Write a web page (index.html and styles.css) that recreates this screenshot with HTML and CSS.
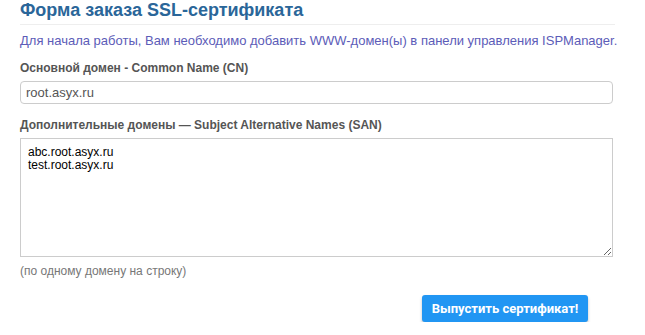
FILE: index.html
```html
<!DOCTYPE html>
<html lang="ru">
<head>
  <meta charset="UTF-8">
  <title>Форма заказа SSL-сертификата</title>
  <link rel="stylesheet" href="styles.css">
</head>
<body>
  <div class="ssl-form">
    <h1 class="page-title">Форма заказа SSL-сертификата</h1>
    <p class="intro">Для начала работы, Вам необходимо добавить WWW-домен(ы) в панели управления ISPManager.</p>

    <form id="sslForm">
      <div class="form-group">
        <label for="cn">Основной домен - Common Name (CN)</label>
        <input type="text" id="cn" class="form-control" value="root.asyx.ru">
      </div>

      <div class="form-group">
        <label for="san">Дополнительные домены — Subject Alternative Names (SAN)</label>
        <textarea id="san" class="form-control san" spellcheck="false">abc.root.asyx.ru
test.root.asyx.ru</textarea>
        <div class="help">(по одному домену на строку)</div>
      </div>

      <div class="actions">
        <button type="submit" class="btn-primary">Выпустить сертификат!</button>
      </div>
    </form>
  </div>
</body>
</html>
```

FILE: styles.css
```css
* {
  box-sizing: border-box;
}

body {
  margin: 0;
  padding: 0 30px 0 20px;
  font-family: "Liberation Sans", Arial, sans-serif;
  background: #fff;
  color: #333;
}

.page-title {
  margin: 0;
  padding: 1px 0 5px;
  font-size: 18px;
  font-weight: bold;
  color: #2a6699;
  border-bottom: 1px solid #eee;
  line-height: 18px;
}

.intro {
  margin: 8px 0 0;
  font-size: 13px;
  line-height: 16px;
  color: #5c5cb8;
  white-space: nowrap;
}

.form-group {
  margin-top: 12px;
}

.form-group + .form-group {
  margin-top: 14px;
}

label {
  display: block;
  font-size: 12px;
  font-weight: bold;
  color: #555;
  line-height: 14px;
  margin-bottom: 6px;
}

.form-control {
  display: block;
  width: 593px;
  font-family: "Liberation Sans", Arial, sans-serif;
  font-size: 13px;
  color: #555;
  border: 1px solid #ccc;
  background: #fff;
  outline: none;
}

input.form-control {
  height: 23px;
  padding: 2px 5px;
  border-radius: 4px;
}

textarea.san {
  height: 119px;
  padding: 7px 7px;
  font-size: 12px;
  line-height: 13px;
  color: #000;
  border-radius: 0;
  resize: vertical;
}

.help {
  margin-top: 6px;
  font-size: 12px;
  color: #777;
  line-height: 16px;
}

.actions {
  display: flex;
  justify-content: flex-end;
  padding-right: 27px;
  margin-top: 16px;
}

.btn-primary {
  width: 166px;
  height: 27px;
  border: none;
  border-radius: 3px;
  background: #2196f3;
  color: #fff;
  font-family: Roboto, "Liberation Sans", sans-serif;
  font-size: 13px;
  font-weight: bold;
  box-shadow: 0 2px 3px rgba(0, 0, 0, 0.25);
  cursor: pointer;
}
```
